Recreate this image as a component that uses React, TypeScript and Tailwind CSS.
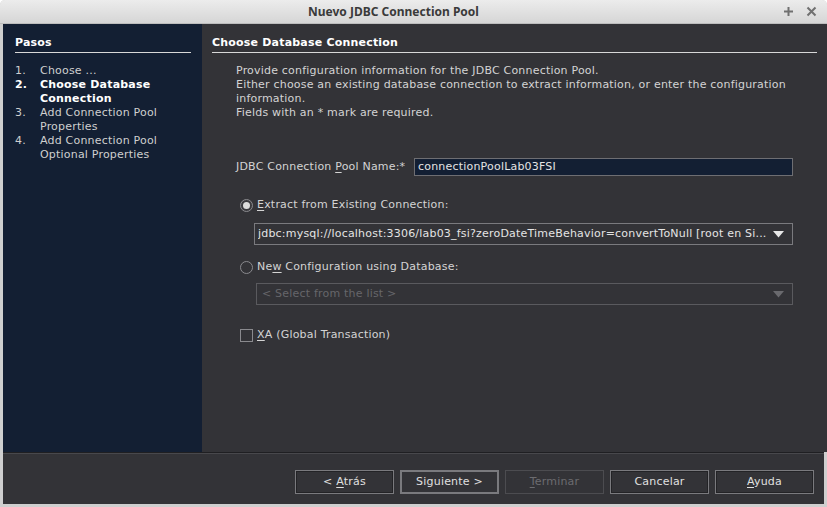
const steps = [
  { n: '1.', label: ['Choose ...'], active: false },
  { n: '2.', label: ['Choose Database', 'Connection'], active: true },
  { n: '3.', label: ['Add Connection Pool', 'Properties'], active: false },
  { n: '4.', label: ['Add Connection Pool', 'Optional Properties'], active: false },
];

function Mn({ c }: { c: string }) {
  return <span className="underline underline-offset-2">{c}</span>;
}

function Arrow({ dim }: { dim?: boolean }) {
  return (
    <svg width="11" height="7" viewBox="0 0 11 7" className="shrink-0">
      <path d="M0 0 H11 L5.5 6.5 Z" fill={dim ? '#6a6a6e' : '#e8e8e8'} />
    </svg>
  );
}

function Btn({ children, disabled, focus }: { children: React.ReactNode; disabled?: boolean; focus?: boolean }) {
  return (
    <div
      className={
        'flex h-[24px] w-[99px] items-center justify-center border ' +
        (disabled
          ? 'border-[#4c4c50] text-[#6c6c70]'
          : focus
            ? 'border-2 border-[#7a7a7e] text-[#e0e0e0]'
            : 'border-[#7a7a7e] text-[#e0e0e0] shadow-[inset_0_0_0_1px_#232326]')
      }
    >
      <span className="whitespace-pre">{children}</span>
    </div>
  );
}

export default function App() {
  return (
    <div
      className="flex h-[507px] w-[827px] flex-col overflow-hidden rounded-t-[5px] bg-[#cfcfcf] text-[11px] leading-[14px] tracking-[0.2px]"
      style={{ fontFamily: '"DejaVu Sans", "Liberation Sans", sans-serif' }}
    >
      <div className="relative flex h-[24px] shrink-0 items-center justify-center border-b border-[#bdbdbd] bg-gradient-to-b from-[#ececec] to-[#d6d6d6] pr-[40px]">
        <span className="text-[12px] font-bold tracking-normal text-[#3a3a3a]" style={{ fontFamily: '"Noto Sans", "DejaVu Sans", sans-serif' }}>
          Nuevo JDBC Connection Pool
        </span>
        <div className="absolute right-[10px] top-[6px] flex items-center gap-[12px]">
          <svg width="11" height="11" viewBox="0 0 11 11">
            <path d="M5.5 1 V10 M1 5.5 H10" stroke="#707070" strokeWidth="2" />
          </svg>
          <svg width="11" height="11" viewBox="0 0 11 11">
            <path d="M1.5 1.5 L9.5 9.5 M9.5 1.5 L1.5 9.5" stroke="#707070" strokeWidth="2" />
          </svg>
        </div>
      </div>

      <div className="flex flex-1 flex-col px-[3px] pb-[3px]">
        <div className="flex h-[428px] shrink-0">
          <div className="w-[199px] shrink-0 bg-[#131f33] pl-[12px] pr-[11px] pt-[12px]">
            <div className="border-b border-[#d8d8d8] pb-[2px] font-bold text-white">Pasos</div>
            <div className="mt-[11px] flex flex-col">
              {steps.map((s) => (
                <div key={s.n} className={'flex ' + (s.active ? 'font-bold text-white' : 'text-[#cfcfcf]')}>
                  <span className="w-[25px] shrink-0">{s.n}</span>
                  <div className="flex flex-col">
                    {s.label.map((l) => (
                      <span key={l}>{l}</span>
                    ))}
                  </div>
                </div>
              ))}
            </div>
          </div>

          <div className="flex-1 bg-[#333337] pl-[10px] pr-[11px] pt-[12px] text-[#d4d4d4]">
            <div className="border-b border-[#d8d8d8] pb-[2px] font-bold text-white">Choose Database Connection</div>
            <div className="pl-[24px] pr-[24px]">
              <div className="mt-[11px] flex flex-col">
                <p>Provide configuration information for the JDBC Connection Pool.</p>
                <p>Either choose an existing database connection to extract information, or enter the configuration information.</p>
                <p>Fields with an * mark are required.</p>
              </div>

              <div className="mt-[38px] flex items-center">
                <span className="w-[178px] shrink-0">
                  JDBC Connection <Mn c="P" />ool Name:*
                </span>
                <div className="flex h-[18px] flex-1 items-center border border-[#6e6e72] bg-[#131f33] pl-[3px] text-[#e4e4e4]">
                  connectionPoolLab03FSI
                </div>
              </div>

              <div className="ml-[4px] mt-[22px] flex items-center gap-[4px]">
                <div className="flex h-[13px] w-[13px] items-center justify-center rounded-full border border-[#8a8a8e] bg-[#3a3a3e]">
                  <div className="h-[7px] w-[7px] rounded-full bg-[#dcdcdc]" />
                </div>
                <span>
                  <Mn c="E" />xtract from Existing Connection:
                </span>
              </div>
              <div className="ml-[18px] mt-[11px] flex h-[22px] items-center gap-[6px] border border-[#7a7a7e] pl-[3px] pr-[8px] text-[#e4e4e4]">
                <span className="flex-1 truncate">jdbc:mysql://localhost:3306/lab03_fsi?zeroDateTimeBehavior=convertToNull [root en Si...</span>
                <Arrow />
              </div>

              <div className="ml-[4px] mt-[15px] flex items-center gap-[4px]">
                <div className="h-[13px] w-[13px] rounded-full border border-[#8a8a8e] bg-[#333337]" />
                <span>
                  Ne<Mn c="w" /> Configuration using Database:
                </span>
              </div>
              <div className="ml-[20px] mt-[9px] flex h-[22px] items-center gap-[6px] border border-[#5a5a5e] pl-[5px] pr-[8px] text-[#66666a]">
                <span className="flex-1 truncate">&lt; Select from the list &gt;</span>
                <Arrow dim />
              </div>

              <div className="ml-[4px] mt-[23px] flex items-center gap-[4px]">
                <div className="h-[13px] w-[13px] border border-[#8a8a8e] bg-[#333337]" />
                <span>
                  <Mn c="X" />A (Global Transaction)
                </span>
              </div>
            </div>
          </div>
        </div>

        <div className="h-[1px] shrink-0 bg-[#1f1f22]" />
        <div className="h-[1px] shrink-0 bg-[#48484c]" />

        <div className="flex flex-1 items-start justify-end gap-[6px] bg-[#333337] pr-[10px] pt-[16px]">
          <Btn>
            &lt; <Mn c="A" />trás
          </Btn>
          <Btn focus>Siguiente &gt;</Btn>
          <Btn disabled>
            <Mn c="T" />erminar
          </Btn>
          <Btn>Cancelar</Btn>
          <Btn>
            <Mn c="A" />yuda
          </Btn>
        </div>
      </div>
    </div>
  );
}
